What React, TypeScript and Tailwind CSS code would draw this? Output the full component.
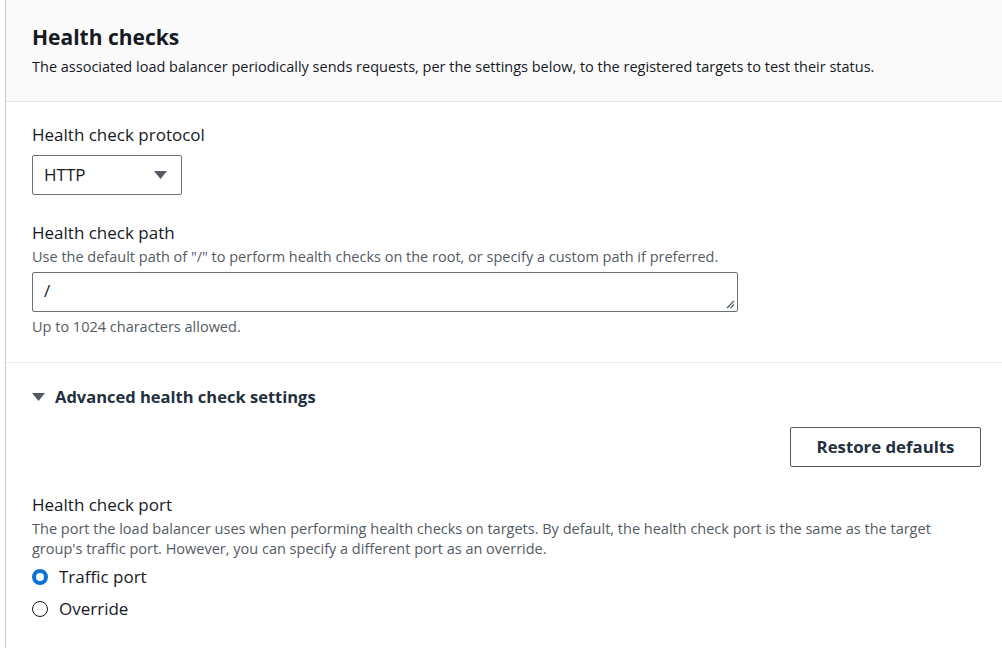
import React from "react";

export default function App() {
  return (
    <div className="w-[1002px] h-[648px] overflow-hidden bg-white text-[#16191f]" style={{ fontFamily: '"Open Sans", "Noto Sans", sans-serif' }}>
      <div className="ml-[5px] h-full border-l border-[#c8c8c8] flex flex-col">
        <div className="bg-[#fafafa] border-b border-[#e4e4e4] px-[26px] pt-[23px] h-[102px]">
          <h2 className="text-[21px] leading-[28px] font-bold text-[#16191f]">Health checks</h2>
          <p className="text-[14.5px] leading-[20px] text-[#16191f] mt-[6px]">
            The associated load balancer periodically sends requests, per the settings below, to the registered targets to test their status.
          </p>
        </div>
        <div className="px-[26px] pt-[21px] border-b border-[#eaeded] pb-[25px]">
          <div className="text-[17px] leading-[24px]">Health check protocol</div>
          <div className="mt-[8px] w-[150px] h-[40px] border border-[#687078] rounded-[2px] flex items-center justify-between pl-[11px] pr-[14px]">
            <span className="text-[17px]">HTTP</span>
            <svg width="13" height="10" viewBox="0 0 13 10"><polygon points="0,1 13,1 6.5,9" fill="#545b64" /></svg>
          </div>
          <div className="mt-[26px] text-[17px] leading-[24px]">Health check path</div>
          <div className="mt-[2px] text-[14.5px] leading-[20px] text-[#545b64]">Use the default path of "/" to perform health checks on the root, or specify a custom path if preferred.</div>
          <div className="relative mt-[5px] w-[706px] h-[40px] border border-[#687078] rounded-[2px] pl-[11px] pt-[6px] text-[17px] leading-[24px]">
            /
            <svg className="absolute right-[2px] bottom-[2px]" width="9" height="9" viewBox="0 0 9 9">
              <line x1="1" y1="8" x2="8" y2="1" stroke="#545b64" strokeWidth="1.2" />
              <line x1="4.5" y1="8" x2="8" y2="4.5" stroke="#545b64" strokeWidth="1.2" />
            </svg>
          </div>
          <div className="mt-[5px] text-[14.5px] leading-[20px] text-[#545b64]">Up to 1024 characters allowed.</div>
        </div>
        <div className="pl-[26px] pr-[21px] pt-[22px]">
          <div className="flex items-center gap-[10px]">
            <svg width="13" height="10" viewBox="0 0 13 10"><polygon points="0,1 13,1 6.5,9" fill="#545b64" /></svg>
            <span className="text-[16.5px] leading-[24px] font-bold text-[#232f3e]">Advanced health check settings</span>
          </div>
          <div className="flex justify-end mt-[18px]">
            <button className="h-[40px] w-[191px] border border-[#545b64] rounded-[2px] text-[16.8px] font-bold text-[#232f3e] bg-white">Restore defaults</button>
          </div>
          <div className="mt-[26px] text-[17px] leading-[24px]">Health check port</div>
          <div className="mt-[2px] text-[14.5px] leading-[20px] text-[#545b64] w-[925px]">
            The port the load balancer uses when performing health checks on targets. By default, the health check port is the same as the target group's traffic port. However, you can specify a different port as an override.
          </div>
          <div className="mt-[6px] flex flex-col gap-[8px]">
            <label className="flex items-center gap-[11px] text-[17px] leading-[24px]">
              <span className="w-[16px] h-[16px] rounded-full border-[4px] border-[#0972d3] bg-white" />
              Traffic port
            </label>
            <label className="flex items-center gap-[11px] text-[17px] leading-[24px]">
              <span className="w-[16px] h-[16px] rounded-full border-[1.5px] border-[#16191f] bg-white" />
              Override
            </label>
          </div>
        </div>
      </div>
    </div>
  );
}
